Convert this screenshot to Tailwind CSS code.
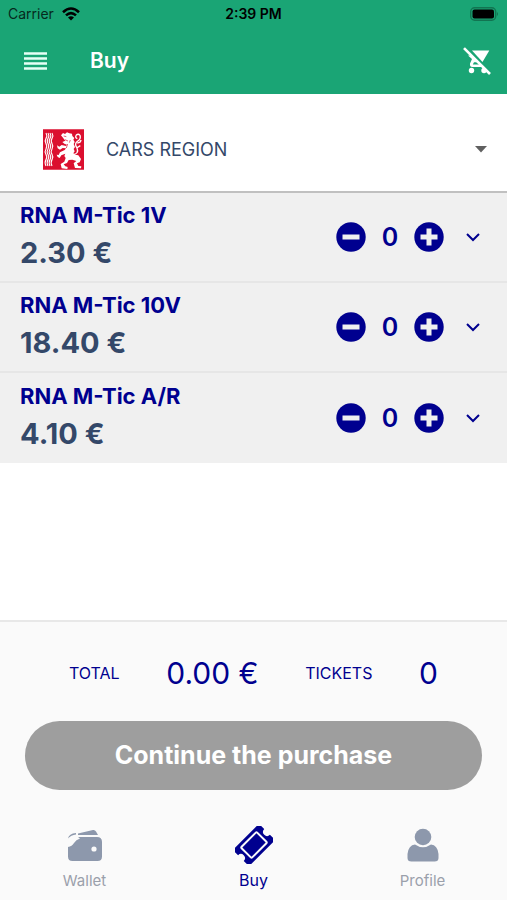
<!DOCTYPE html>
<html lang="en">

<head>
    <meta charset="UTF-8">
    <meta name="viewport" content="width=device-width, initial-scale=1.0">
    <title>Buy</title>
    <script src="https://cdn.jsdelivr.net/npm/@tailwindcss/browser@4"></script>
</head>

<body class="min-h-screen flex flex-col bg-white text-[#00008f] font-[Inter,sans-serif]">
    <!-- shared icons -->
    <svg class="hidden">
        <symbol id="minus" viewBox="0 0 30 30">
            <circle cx="15" cy="15" r="14.7" fill="#00008f" />
            <path d="M6.500 12.500h17v5h-17z" fill="#f0f0f0" />
        </symbol>
        <symbol id="plus" viewBox="0 0 30 30">
            <circle cx="15" cy="15" r="14.7" fill="#00008f" />
            <path d="M6.500 12.500h6v-6h5v6h6v5h-6v6h-5v-6h-6z" fill="#f0f0f0" />
        </symbol>
        <symbol id="chevron" viewBox="0 0 16 16">
            <path d="M2 5l6 6 6-6" fill="none" stroke="#00008f" stroke-width="2" />
        </symbol>
    </svg>

    <header class="bg-[#1aa575] text-white">
        <div class="h-7 px-2 grid grid-cols-3 items-center text-black text-sm">
            <div class="flex items-center gap-2">
                <span class="text-[#06291d]">Carrier</span>
                <svg class="w-[18px] h-[14px]" viewBox="0 0 18 14">
                    <g fill="none" stroke="#000" stroke-width="2.600">
                        <path d="M1 5.200Q9-2.200 17 5.200" />
                        <path d="M4 8.400Q9 3.800 14 8.400" />
                    </g>
                    <path d="M6 10.500Q9 8 12 10.500L9 13.600z" />
                </svg>
            </div>
            <span class="text-center font-semibold whitespace-nowrap">2:39 PM</span>
            <svg class="justify-self-end w-[29px] h-[14px]" viewBox="0 0 29 14">
                <rect x="0.700" y="0.700" width="25" height="12.600" rx="4" fill="none" stroke="#127451" stroke-width="1.400" />
                <rect x="2.500" y="2.500" width="21.500" height="9" rx="2" />
                <path d="M27 5q2 2 0 4z" fill="#127451" />
            </svg>
        </div>
        <div class="h-[66px] pl-6 pr-4 flex items-center">
            <button aria-label="Menu">
                <svg class="w-[23px] h-[18px]" viewBox="0 0 23 18">
                    <path d="M0 1.500h23M0 6.500h23M0 11.500h23M0 16.500h23" stroke="#e6fff6" stroke-width="2.600" />
                </svg>
            </button>
            <h1 class="ml-[43px] text-[21px] leading-7 font-semibold">Buy</h1>
            <button aria-label="Empty cart" class="ml-auto">
                <svg class="w-7 h-7" viewBox="0 0 28 28" fill="#fff">
                    <path d="M9 3.500h17.300L19.500 15z" />
                    <path d="M5 8.500L9 12 7 16.500Q6.500 20 9.500 20H19l-2.500-2.500H9.800l1.200-2.200h3.500L8 8.500z" />
                    <circle cx="8.500" cy="23.500" r="2.700" />
                    <circle cx="21" cy="23.500" r="2.700" />
                    <path d="M2.600 0L28 25.500" stroke="#1aa575" stroke-width="1.500" />
                    <path d="M1 1.200L27 27" stroke="#fff" stroke-width="2.600" />
                </svg>
            </button>
        </div>
    </header>

    <main class="flex-1">
        <div class="relative h-[99px] pt-[14px] pl-[43px] flex items-center border-b-2 border-[#c0c0c0]">
            <label for="network" aria-label="Network" class="shrink-0">
                <svg class="w-[41px] h-[41px]" viewBox="0 0 123 121">
                    <path d="M0 0h123v121H0z" fill="#db0f2f" />
                    <g fill="none" stroke="#fff" stroke-width="3.500">
                        <path d="M9 11q5 8 0 16t0 16 0 16 0 16 0 16 0 19" />
                        <path d="M15 11q5 8 0 16t0 16 0 16 0 16 0 16 0 19" />
                        <path d="M21 11q5 8 0 16t0 16 0 16 0 16 0 16 0 19" />
                        <path d="M27 11q5 8 0 16t0 16 0 16 0 16 0 16 0 19" />
                    </g>
                    <path fill="#fff" d="M54 18l6-7 6 3 6-5 7 3 8 1 1 7 6 6-3 5 4 7-3 6 4 9-4 6 3 7-4 6 6 4 9 2 8 11-4 10-8 3 4 8 9 1-1 6-18-1-4-14 8-7-12-4-11 1-5 9-10 4 5 6 7 2-1 6-17-2-3-13 11-7 4-11-4-6 3-7-12 5-5 8-6-3-3-7 6 1 4-8 14-7 4-5-10-1-8 5-7-4-2-9 7 4 7-5 13 3 3-4-8-3-6-5 9-4z" />
                    <path fill="none" stroke="#fff" stroke-width="4" d="M90 76q19-3 12-20-9-12 1-20 12-6 8-18-5-6-11-1-5 8 3 11M103 41q10 0 11-9M101 56l11-7" />
                    <path fill="none" stroke="#db0f2f" stroke-width="2" d="M62 20l8 2M66 31l9 4M74 44l-4 12M82 32l-3 8" />
                </svg>
            </label>
            <select id="network" class="flex-1 min-w-0 h-12 pl-[22px] appearance-none bg-transparent text-lg text-[#344869]">
                <option>CARS REGION</option>
            </select>
            <svg class="absolute right-5 top-[52px] w-3 h-[7px] pointer-events-none" viewBox="0 0 12 7">
                <path d="M0 0h12L6 6.500z" fill="#606060" />
            </svg>
        </div>

        <ul class="bg-[#f0f0f0]">
            <li class="h-[90px] pl-5 pr-[26px] flex items-center border-b-2 border-[#e6e6e6]">
                <div class="flex-1">
                    <h2 class="text-[22px] leading-8 font-bold">RNA M-Tic 1V</h2>
                    <p class="text-[29px] leading-11 font-bold text-[#344869]">2.30 €</p>
                </div>
                <button aria-label="Remove one"><svg class="w-[30px] h-[30px]"><use href="#minus" /></svg></button>
                <span class="w-12 pt-px text-center text-[25px] font-semibold">0</span>
                <button aria-label="Add one"><svg class="w-[30px] h-[30px]"><use href="#plus" /></svg></button>
                <button aria-label="Details" class="ml-[21px]"><svg class="w-4 h-4"><use href="#chevron" /></svg></button>
            </li>
            <li class="h-[90px] pl-5 pr-[26px] flex items-center border-b-2 border-[#e6e6e6]">
                <div class="flex-1">
                    <h2 class="text-[22px] leading-8 font-bold">RNA M-Tic 10V</h2>
                    <p class="text-[29px] leading-11 font-bold text-[#344869]">18.40 €</p>
                </div>
                <button aria-label="Remove one"><svg class="w-[30px] h-[30px]"><use href="#minus" /></svg></button>
                <span class="w-12 pt-px text-center text-[25px] font-semibold">0</span>
                <button aria-label="Add one"><svg class="w-[30px] h-[30px]"><use href="#plus" /></svg></button>
                <button aria-label="Details" class="ml-[21px]"><svg class="w-4 h-4"><use href="#chevron" /></svg></button>
            </li>
            <li class="h-[90px] pl-5 pr-[26px] flex items-center">
                <div class="flex-1">
                    <h2 class="text-[22px] leading-8 font-bold">RNA M-Tic A/R</h2>
                    <p class="text-[29px] leading-11 font-bold text-[#344869]">4.10 €</p>
                </div>
                <button aria-label="Remove one"><svg class="w-[30px] h-[30px]"><use href="#minus" /></svg></button>
                <span class="w-12 pt-px text-center text-[25px] font-semibold">0</span>
                <button aria-label="Add one"><svg class="w-[30px] h-[30px]"><use href="#plus" /></svg></button>
                <button aria-label="Details" class="ml-[21px]"><svg class="w-4 h-4"><use href="#chevron" /></svg></button>
            </li>
        </ul>
    </main>

    <footer class="bg-[#fafafa] border-t-2 border-[#e8e8e8]">
        <div class="h-[99px] px-[69px] pt-[2px] flex items-center justify-between">
            <span class="text-base">TOTAL</span>
            <span class="text-3xl">0.00 €</span>
            <span class="text-base">TICKETS</span>
            <span class="text-3xl">0</span>
        </div>
        <div class="px-[25px]">
            <button class="w-full h-[69px] rounded-full bg-[#9e9e9e] text-white text-[25px] font-bold">Continue the purchase</button>
        </div>
        <nav class="h-[110px] pt-9 grid grid-cols-3 text-[15px] text-[#9aa0ab]">
            <a href="#" class="flex flex-col items-center gap-2">
                <svg class="w-9 h-9" viewBox="0 0 36 36" fill="#8d98ac">
                    <path d="M11 11H30q5 0 5 5v14.500q0 4.500-4.500 4.500h-25Q1 35 1 30.500V21q4-.500 6-4t6-4.500z" />
                    <path d="M1 12.500q1-5 8-5.500v1.500Q4 9 1 12.500zM11 7.500L26 4q2-.3 3 1.500l2 3.500H11z" />
                    <circle cx="27" cy="23" r="2.600" fill="#fafafa" />
                </svg>
                <span>Wallet</span>
            </a>
            <a href="#" class="flex flex-col items-center gap-1 text-base text-[#00008f]">
                <svg class="w-[38px] h-[38px]" viewBox="1 1 38 38">
                    <g transform="rotate(-45 20 20)">
                        <path d="M4 8.500h32q2.500 0 2.500 2.500v5a4 4 0 0 0 0 8v5q0 2.500-2.500 2.500H4Q1.500 31.500 1.500 29v-5a4 4 0 0 0 0-8v-5Q1.500 8.500 4 8.500z" fill="#00008f" />
                        <rect x="9" y="12.500" width="22" height="15" rx="1" fill="none" stroke="#fafafa" stroke-width="2" />
                    </g>
                </svg>
                <span>Buy</span>
            </a>
            <a href="#" class="flex flex-col items-center gap-2">
                <svg class="w-9 h-9" viewBox="0 0 36 36" fill="#8d98ac">
                    <circle cx="18" cy="11" r="8.300" />
                    <path d="M10 18.500q8 5.500 16 0 6.500 .5 7.500 9.500v4q0 3.600-4 3.600H6.500q-4 0-4-3.600v-4Q3.500 19 10 18.500z" />
                </svg>
                <span>Profile</span>
            </a>
        </nav>
    </footer>
</body>

</html>
